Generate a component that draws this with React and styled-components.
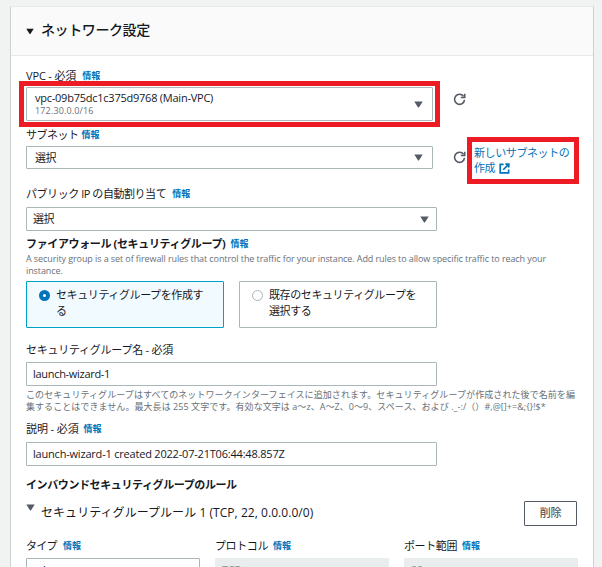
import React from 'react'
import { createGlobalStyle, styled } from 'styled-components'

function Refresh() {
  return (
    <RefreshIcon viewBox="0 0 14 14">
      <path d="M11.4 3.6A5.4 5.4 0 1 0 12.4 7.4" />
      <path d="M12.6 0.8V4.8H8.4" />
    </RefreshIcon>
  )
}

function External() {
  return (
    <ExternalIcon viewBox="0 0 12 12">
      <path d="M5 1.5H1.3V10.7H10.5V7" />
      <path d="M7 1.3H10.7V5M10.5 1.5L4.6 7.4" />
    </ExternalIcon>
  )
}

function Caret({ size = 9 }) {
  return (
    <CaretIcon $size={size} viewBox="0 0 9 7">
      <path d="M0.3 0.4H8.7L4.9 6.4H4.1Z" />
    </CaretIcon>
  )
}

function Label({ children, info, gap = 6, bold, ls }) {
  return (
    <LabelRow $gap={gap}>
      <LabelText $bold={bold} $ls={ls}>{children}</LabelText>
      {info && <Info>情報</Info>}
    </LabelRow>
  )
}

export default function App() {
  return (
    <>
      <Global />
      <Panel>
        <Header>
          <Caret size={8} />
          <Title>ネットワーク設定</Title>
        </Header>
        <Body>
          <Label info gap={6} ls={-0.15}>VPC - 必須</Label>
          <FieldRow $height={34} $top={2}>
            <Highlight $inset="-6px -7px">
              <Select $height={34} $inner>
                <div>
                  <Value $ls={-0.24}>vpc-09b75dc1c375d9768 (Main-VPC)</Value>
                  <Cidr>172.30.0.0/16</Cidr>
                </div>
                <Caret />
              </Select>
            </Highlight>
            <RefreshButton $raise>
              <Refresh />
            </RefreshButton>
          </FieldRow>

          <Section $top={5}>
            <Label info gap={3} ls={-0.5}>サブネット</Label>
            <FieldRow $height={23} $top={2}>
              <Select $height={23} $inner>
                <Value $ls={-0.4}>選択</Value>
                <Caret />
              </Select>
              <RefreshButton>
                <Refresh />
              </RefreshButton>
              <Highlight $inset="-3px -10px -9px -7px">
                <Link href="#">
                  新しいサブネットの
                  <br />
                  作成 <External />
                </Link>
              </Highlight>
            </FieldRow>
          </Section>

          <Section $top={16}>
            <Label info gap={6} ls={-0.45}>パブリック IP の自動割り当て</Label>
            <FieldRow $height={24} $top={4}>
              <Select $height={24}>
                <Value $ls={-0.4}>選択</Value>
                <Caret />
              </Select>
            </FieldRow>
          </Section>

          <Section $top={4}>
            <Label info gap={5} bold ls={-0.36}>ファイアウォール (セキュリティグループ)</Label>
            <Help $ls={-0.09} $top={0}>
              A security group is a set of firewall rules that control the traffic for your instance. Add rules to allow specific traffic to reach your
              <br />
              instance.
            </Help>
            <Tiles>
              <Tile $selected>
                <Radio $selected />
                <TileText>
                  セキュリティグループを作成す
                  <br />
                  る
                </TileText>
              </Tile>
              <Tile>
                <Radio />
                <TileText>
                  既存のセキュリティグループを
                  <br />
                  選択する
                </TileText>
              </Tile>
            </Tiles>
          </Section>

          <Section $top={13}>
            <Label ls={-0.25}>セキュリティグループ名 - 必須</Label>
            <Input $top={3}>
              <Value $ls={-0.3}>launch-wizard-1</Value>
            </Input>
            <Help $ls={0.08} $top={3}>
              このセキュリティグループはすべてのネットワークインターフェイスに追加されます。セキュリティグループが作成された後で名前を編
              <br />
              <Allowed>集することはできません。最大長は 255 文字です。有効な文字は a〜z、A〜Z、0〜9、スペース、および ._-:/（）#,@[]+=&amp;;{'{}'}!$*</Allowed>
            </Help>
          </Section>

          <Section $top={7}>
            <Label info gap={5} ls={-0.1}>説明 - 必須</Label>
            <Input $top={4}>
              <Value $ls={-0.2}>launch-wizard-1 created 2022-07-21T06:44:48.857Z</Value>
            </Input>
          </Section>

          <Section $top={10}>
            <Label bold ls={-0.4}>インバウンドセキュリティグループのルール</Label>
            <RuleRow>
              <Caret />
              <RuleTitle>セキュリティグループルール 1 (TCP, 22, 0.0.0.0/0)</RuleTitle>
              <DeleteButton>削除</DeleteButton>
            </RuleRow>
          </Section>

          <Columns>
            <div>
              <Label info gap={6} ls={-0.7}>タイプ</Label>
              <Input $full $top={3}>
                <Value $ls={-0.2}>ssh</Value>
              </Input>
            </div>
            <div>
              <Label info gap={5} ls={-0.4}>プロトコル</Label>
              <Input $full $disabled $top={3}>
                <Value $ls={-0.2}>TCP</Value>
              </Input>
            </div>
            <div>
              <Label info gap={5} ls={-0.4}>ポート範囲</Label>
              <Input $full $disabled $top={3}>
                <Value $ls={-0.2}>22</Value>
              </Input>
            </div>
          </Columns>
        </Body>
      </Panel>
    </>
  )
}

const Global = createGlobalStyle`
* {
  box-sizing: border-box;
}
html, body, #root {
  height: 100%;
}
body {
  margin: 0;
  overflow: hidden;
  background: #f1f3f3;
  color: #16191f;
  font-family: 'Open Sans', 'Noto Sans CJK JP', sans-serif;
  font-size: 11px;
}
`
const Panel = styled.section`
height: calc(100% - 6px);
margin: 6px 8px 0 10px;
border: 1px solid #ccd1d1;
border-top-color: #e6eaea;
border-bottom: 0;
background: white;
overflow: hidden;
`
const Header = styled.header`
display: flex;
align-items: center;
gap: 7px;
height: 49px;
padding: 0 15px;
border-bottom: 1px solid #e6eaea;
background: #fafafa;
svg {
  fill: #16191f;
}
`
const Title = styled.h2`
margin: -4px 0 0;
font-size: 14px;
font-weight: 500;
letter-spacing: -0.4px;
`
const Body = styled.div`
padding: 11px 15px 0;
`
const Section = styled.div`
padding-top: ${(p) => p.$top}px;
`
const LabelRow = styled.div`
display: flex;
align-items: center;
gap: ${(p) => p.$gap}px;
height: 18px;
line-height: 18px;
white-space: nowrap;
`
const LabelText = styled.span`
font-weight: ${(p) => (p.$bold ? 700 : 400)};
letter-spacing: ${(p) => p.$ls || 0}px;
`
const Info = styled.a`
color: #0073bb;
font-size: 9px;
font-weight: 700;
`
const FieldRow = styled.div`
display: flex;
align-items: center;
height: ${(p) => p.$height}px;
margin-top: ${(p) => p.$top}px;
`
const Highlight = styled.div`
position: relative;
&:after {
  content: "";
  position: absolute;
  inset: ${(p) => p.$inset};
  border: 5px solid #ed1c24;
}
`
const Select = styled.div`
display: flex;
align-items: center;
justify-content: space-between;
width: ${(p) => (p.$inner ? 407 : 411)}px;
height: ${(p) => p.$height}px;
padding: 0 ${(p) => (p.$inner ? 9 : 7)}px 0 ${(p) => (p.$inner ? 8 : 6)}px;
border: 1px solid #aab7b8;
border-radius: 1px;
`
const Value = styled.div`
line-height: 14px;
letter-spacing: ${(p) => p.$ls}px;
white-space: nowrap;
`
const Cidr = styled.div`
color: #687078;
font-size: 9px;
line-height: 12px;
letter-spacing: 0.15px;
`
const CaretIcon = styled.svg`
flex: none;
width: ${(p) => p.$size}px;
height: 7px;
fill: #545b64;
`
const RefreshButton = styled.span`
display: flex;
margin: ${(p) => (p.$raise ? '-10px' : '0')} 8px 0 20px;
`
const RefreshIcon = styled.svg`
width: 13px;
height: 13px;
fill: none;
stroke: #545b64;
stroke-width: 1.7;
`
const ExternalIcon = styled.svg`
width: 11px;
height: 11px;
margin-left: 1px;
vertical-align: -2px;
fill: none;
stroke: #0073bb;
stroke-width: 1.8;
`
const Link = styled.a`
display: block;
padding-top: 5px;
color: #0073bb;
line-height: 15px;
letter-spacing: -0.4px;
text-decoration: none;
white-space: nowrap;
`
const Help = styled.div`
margin-top: ${(p) => p.$top}px;
color: #687078;
font-size: 9px;
line-height: 12px;
letter-spacing: ${(p) => p.$ls}px;
white-space: nowrap;
`
const Allowed = styled.span`
letter-spacing: 0.06px;
`
const Tiles = styled.div`
display: grid;
grid-template-columns: 198px 198px;
gap: 15px;
margin-top: 4px;
`
const Tile = styled.div`
display: flex;
gap: 6px;
height: 47px;
padding: 5px 12px;
border: 1px solid ${(p) => (p.$selected ? '#00a1c9' : '#aab7b8')};
border-radius: 1px;
background: ${(p) => (p.$selected ? '#f1faff' : 'white')};
`
const Radio = styled.span`
flex: none;
width: 11px;
height: 11px;
margin-top: 3px;
border: ${(p) => (p.$selected ? '4px solid #0073bb' : '1px solid #aab7b8')};
border-radius: 50%;
background: white;
`
const TileText = styled.span`
line-height: 16px;
letter-spacing: -0.4px;
white-space: nowrap;
`
const Input = styled.div`
display: flex;
align-items: center;
width: ${(p) => (p.$full ? '100%' : '411px')};
height: 24px;
margin-top: ${(p) => p.$top}px;
padding: 0 6px;
border: 1px solid ${(p) => (p.$disabled ? '#eaeded' : '#aab7b8')};
border-radius: 1px;
background: ${(p) => (p.$disabled ? '#eaeded' : 'white')};
color: ${(p) => (p.$disabled ? '#879596' : '#16191f')};
`
const RuleRow = styled.div`
display: flex;
align-items: center;
gap: 6px;
height: 25px;
margin-top: 7px;
svg {
  margin-bottom: 12px;
}
`
const RuleTitle = styled.span`
padding-bottom: 4px;
font-size: 12px;
letter-spacing: 0.05px;
`
const DeleteButton = styled.button`
width: 53px;
height: 25px;
margin: 0 1px 0 auto;
padding: 0 0 3px;
border: 1px solid #545b64;
border-radius: 1px;
background: white;
color: #545b64;
font: 500 11px 'Open Sans', 'Noto Sans CJK JP', sans-serif;
letter-spacing: -0.3px;
`
const Columns = styled.div`
display: grid;
grid-template-columns: repeat(3, 174px);
gap: 15px;
padding-top: 11px;
`
